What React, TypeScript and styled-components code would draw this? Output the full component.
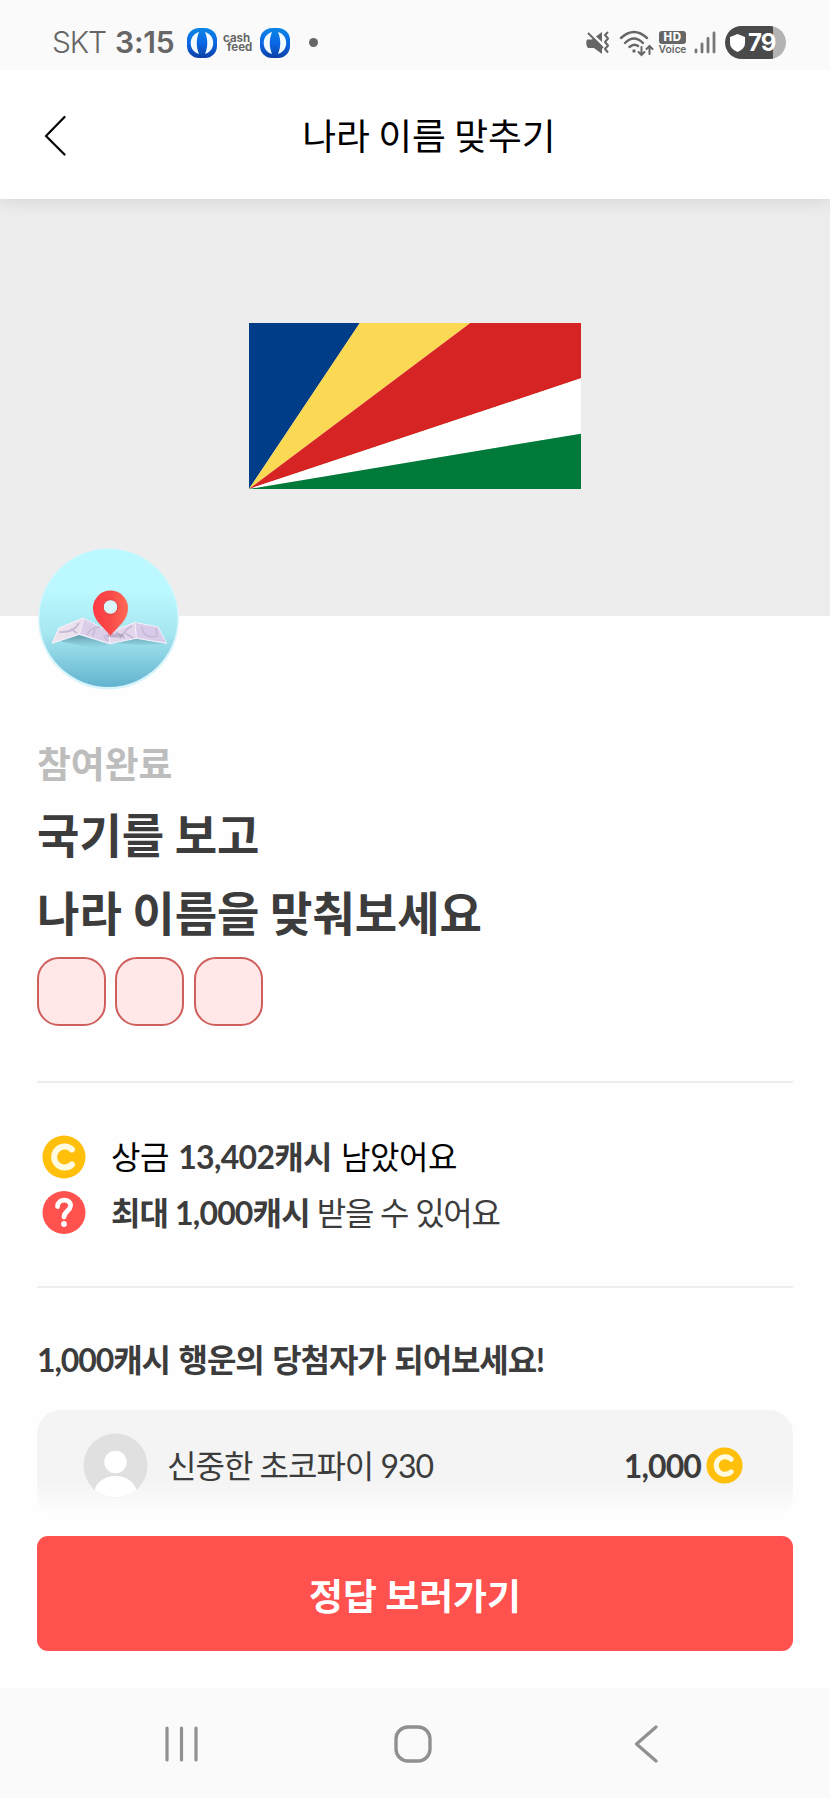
import React from "react";
import styled, { createGlobalStyle } from "styled-components";

const GlobalStyle = createGlobalStyle`
  * { box-sizing: border-box; }
  body { margin: 0; background: #fefefe; }
  p, h1, h2, h3 { margin: 0; font-weight: inherit; }
`;

const Screen = styled.div`
  width: 830px;
  height: 1798px;
  display: flex;
  flex-direction: column;
  overflow: hidden;
  background: #fefefe;
  color: #3c3c3c;
  font-family: Lato, "Noto Sans CJK KR", sans-serif;
`;

const StatusBar = styled.div`
  position: relative;
  z-index: 2;
  height: 70px;
  flex: none;
  display: flex;
  justify-content: space-between;
  padding: 26px 44px 0 52px;
  background: #fafafa;
  color: #666;
  font-family: Inter, sans-serif;
`;

const StatusGroup = styled.div`
  height: 33px;
  display: flex;
  align-items: center;
`;

const Carrier = styled.span`
  width: 63px;
  font-size: 30px;
  font-weight: 300;
  line-height: 33px;
  letter-spacing: -1.2px;
`;

const Clock = styled.span`
  width: 72px;
  font-size: 30px;
  font-weight: 600;
  line-height: 33px;
  letter-spacing: -0.2px;
`;

const CashFeed = styled.span`
  width: 43px;
  padding-left: 6px;
  font-size: 11.5px;
  font-weight: 700;
  line-height: 9px;
  white-space: nowrap;
  span { display: block; }
  span + span { padding-left: 4px; }
`;

const NoticeDot = styled.i`
  width: 9px;
  height: 9px;
  margin-left: 19px;
  border-radius: 50%;
  background: #666;
`;

const StatusIcons = styled.div`
  display: flex;
  align-items: center;
  gap: 9px;
`;

const VoiceBadge = styled.div`
  width: 27px;
  margin: 1px 8px 0 5px;
  display: flex;
  flex-direction: column;
  align-items: center;
  font-family: Roboto, sans-serif;
  font-size: 11px;
  font-weight: 500;
  line-height: 11px;
  b {
    width: 27px;
    height: 13px;
    border-radius: 3px;
    background: #666;
    color: #fff;
    font: 800 11.5px/13px Inter, sans-serif;
    letter-spacing: 0.6px;
    text-align: center;
  }
`;

const Battery = styled.div`
  width: 61px;
  height: 33px;
  margin-left: 9px;
  padding-left: 5px;
  display: flex;
  align-items: center;
  gap: 3px;
  border-radius: 17px;
  background: linear-gradient(90deg, #4a4a4a 48px, #b3b3b3 48px);
  color: #fff;
  font-size: 24px;
  font-weight: 700;
  letter-spacing: -1px;
`;

const Header = styled.header`
  position: relative;
  z-index: 1;
  height: 129px;
  flex: none;
  display: grid;
  grid-template-columns: 100px 1fr 72px;
  align-items: center;
  background: #fff;
  box-shadow: 0 2px 18px rgba(0, 0, 0, 0.11);
`;

const BackIcon = styled.svg`
  margin-left: 43px;
`;

const HeaderTitle = styled.h1`
  padding-bottom: 2px;
  color: #000;
  text-align: center;
  font: 400 36.8px/50px "Noto Sans CJK KR", sans-serif;
`;

const Hero = styled.section`
  height: 417px;
  flex: none;
  display: flex;
  justify-content: center;
  padding-top: 124.4px;
  background: #ededed;
`;

const Content = styled.main`
  flex: 1;
  padding: 0 37px;
`;

const Emblem = styled.svg`
  display: block;
  position: relative;
  margin: -68px 0 0 0;
`;

const State = styled.p`
  margin-top: 44px;
  color: #bdbdbd;
  font: 700 36.8px/54px "Noto Sans CJK KR", sans-serif;
`;

const Question = styled.h2`
  margin-top: 6px;
  font: 700 46.1px/77.6px "Noto Sans CJK KR", sans-serif;
`;

const AnswerRow = styled.div`
  display: flex;
  gap: 9.4px;
  margin-top: 7px;
`;

const AnswerBox = styled.i`
  width: 69px;
  height: 69px;
  border: 2px solid #cf5f5d;
  border-radius: 22px;
  background: #ffe8e7;
`;

const Facts = styled.section`
  height: 207px;
  margin-top: 55px;
  padding: 46px 0 0 5px;
  border-top: 2px solid #ededed;
  border-bottom: 2px solid #ededed;
`;

const Fact = styled.p<{ $dark?: boolean }>`
  height: 55.6px;
  display: flex;
  align-items: center;
  gap: 25px;
  color: ${(p) => (p.$dark ? "#000" : "#3c3c3c")};
  font-size: 32px;
  line-height: 55px;
  letter-spacing: ${(p) => (p.$dark ? "-0.5px" : "-1.25px")};
  word-spacing: ${(p) => (p.$dark ? "1.6px" : "0")};
  white-space: nowrap;
  b { color: #3c3c3c; letter-spacing: ${(p) => (p.$dark ? "-0.7px" : "-0.85px")}; }
`;

const LuckyTitle = styled.h3`
  margin-top: 44px;
  font-size: 32px;
  font-weight: 700;
  line-height: 55px;
  letter-spacing: -1.1px;
  word-spacing: 2px;
`;

const WinnerCard = styled.div`
  height: 110px;
  margin-top: 23px;
  padding: 0 50px 0 46px;
  display: flex;
  align-items: center;
  border-radius: 24px;
  background: linear-gradient(#f4f4f4 72px, #fefefe 105px);
`;

const WinnerName = styled.span`
  flex: 1;
  margin: 2px 0 0 19px;
  font-size: 32px;
  line-height: 48px;
  letter-spacing: -1px;
`;

const Prize = styled.b`
  margin: 2px 5px 0 0;
  font-size: 32px;
  line-height: 48px;
  letter-spacing: -0.9px;
`;

const AnswerButton = styled.button`
  display: block;
  width: 756px;
  height: 115px;
  margin-top: 16px;
  padding: 0;
  border: 0;
  border-radius: 11px;
  background: #ff514e;
  color: #fff;
  font: 700 36.9px/112px "Noto Sans CJK KR", sans-serif;
`;

const NavBar = styled.nav`
  height: 110px;
  flex: none;
  display: flex;
  justify-content: space-between;
  padding: 37px 171px 0 164px;
  background: #fafafa;
`;

const HomeIcon = styled.svg`
  margin-right: 7px;
`;

function AppIcon() {
  return (
    <svg width="30" height="30" viewBox="0 0 30 30">
      <defs>
        <linearGradient id="appBlue" x2="0" y2="1">
          <stop stopColor="#0c86e4" />
          <stop offset=".5" stopColor="#0a67e6" />
          <stop offset="1" stopColor="#0d3fa4" />
        </linearGradient>
      </defs>
      <rect width="30" height="30" rx="12" fill="url(#appBlue)" />
      <path d="M12 4C1 7 1 23 12 26C9 19 9 11 12 4ZM18 4C29 7 29 23 18 26C21 19 21 11 18 4Z" fill="#f2fbff" />
    </svg>
  );
}

function MuteIcon() {
  return (
    <svg width="24" height="24" viewBox="0 0 24 24" fill="none" stroke="#666" strokeWidth="2">
      <path d="M1 8.500h5l2-1.500 8 8v8l-8-6H2q-3-4-1-8.500ZM10 5.500L16 1v10Z" fill="#666" stroke="none" />
      <path d="M2 2l15 15" />
      <path d="M22 1l-3 3 3 3.500-3 3.500 3 3.500-3 3.500 3 3.500" strokeLinejoin="round" />
    </svg>
  );
}

function WifiIcon() {
  return (
    <svg width="35" height="28" viewBox="0 0 35 28" fill="none" stroke="#666" strokeWidth="2.400" strokeLinecap="round">
      <path d="M2 9Q15-3 28 9M6 14Q15 5 24 14M10.500 18Q15 14 19 17" />
      <circle cx="15" cy="22" r="1.700" fill="#666" stroke="none" />
      <path d="M22.500 18v8m-3-3 3 3 3-3M30.500 25v-8m-3 3 3-3 3 3" strokeWidth="2" />
    </svg>
  );
}

function SignalIcon() {
  return (
    <svg width="22" height="24" viewBox="0 0 22 24" stroke="#777" strokeWidth="2.800" strokeLinecap="round">
      <path d="M2 19v2M8 13v8M14 7.500v13.500M20 2v19" />
    </svg>
  );
}

function Coin({ size }: { size: number }) {
  return (
    <svg width={size} height={size} viewBox="0 0 44 44">
      <circle cx="22" cy="22" r="21.500" fill="#ffbf0a" />
      <path d="M30 14.500A10.500 10.500 0 1 0 30 29.500" fill="none" stroke="#fffbe0" strokeWidth="6" strokeLinecap="round" />
    </svg>
  );
}

function QuestionMark() {
  return (
    <svg width="44" height="44" viewBox="0 0 44 44">
      <circle cx="22" cy="21.500" r="21.500" fill="#ff514e" />
      <path d="M15.500 15.500C16 6.500 29 7.500 28.500 15C28 20 22 20.500 22 26" fill="none" stroke="#fff" strokeWidth="4.800" strokeLinecap="round" />
      <circle cx="22" cy="33" r="2.900" fill="#fff" />
    </svg>
  );
}

function MapEmblem() {
  return (
    <Emblem width="143" height="143" viewBox="0 0 143 143">
      <defs>
        <linearGradient id="sky" x2="0" y2="1">
          <stop offset=".3" stopColor="#bcf8ff" />
          <stop offset=".62" stopColor="#a5e6f0" />
          <stop offset="1" stopColor="#62b3cf" />
        </linearGradient>
        <linearGradient id="pin">
          <stop stopColor="#ff3a46" />
          <stop offset=".5" stopColor="#f84a48" />
          <stop offset="1" stopColor="#ff6b55" />
        </linearGradient>
        <linearGradient id="shade" x2="0" y2="1">
          <stop stopColor="#4d8093" stopOpacity=".8" />
          <stop offset="1" stopColor="#6bb5c7" stopOpacity="0" />
        </linearGradient>
        <linearGradient id="paper">
          <stop stopColor="#eee3ec" />
          <stop offset="1" stopColor="#ddd0ec" />
        </linearGradient>
      </defs>
      <circle cx="71.500" cy="71" r="70.500" fill="#d8f5fc" />
      <circle cx="71.500" cy="70" r="69" fill="url(#sky)" />
      <path d="M22 93l20-6 30 9-12 5zM74 95l26-5 28 6-22 1z" fill="url(#shade)" />
      <path d="M22 80L46 70 73 84 98 74.500 121 79 129.500 95.300 99.500 90.300 72.500 95.700 42.500 86.300 15 95.300z" fill="url(#paper)" stroke="#f7f2fb" strokeWidth="1" />
      <path d="M46 70.500L73 84.500v10.500L42.500 85.500zM98 75l22.500 4.500L128.500 94 99.500 89z" fill="#d3c4e8" opacity=".6" />
      <path d="M22 84q15 1 20-9M34 81l6 4M50 87q3-8 13-8M58 81l-2 7M67 88l4 5M79 84l9 6M83 91q4-9 12-13M88 85l8 5M105 79q1 12 15 9l-1-8" fill="none" stroke="#c6b9d8" strokeWidth="1.700" />
      <path d="M42.500 86l4-15M72.500 95V85M99.500 90L98 75.500" stroke="#f8f0fa" fill="none" />
      <ellipse cx="78" cy="87.500" rx="9" ry="2" fill="#9989a5" opacity=".5" />
      <path d="M73.500 88C67 79 56 73 56 60A17.500 17.500 0 0 1 91 60C91 73 80 79 73.500 88Z" fill="url(#pin)" />
      <circle cx="73.500" cy="59" r="7.300" fill="#daf8fa" stroke="#e33b42" />
    </Emblem>
  );
}

function Flag() {
  return (
    <svg width="332" height="166" viewBox="0 0 332 166">
      <path d="M0 166V0h111z" fill="#003d88" />
      <path d="M0 166L110.670 0h110.660z" fill="#fcd955" />
      <path d="M0 166L221.330 0H332v55.330z" fill="#d62424" />
      <path d="M0 166L332 55.330v55.340z" fill="#fff" />
      <path d="M0 166l332-55.330V166z" fill="#007a39" />
    </svg>
  );
}

function Avatar() {
  return (
    <svg width="65" height="65" viewBox="0 0 65 65">
      <clipPath id="avatarClip"><circle cx="32.500" cy="32.500" r="32" /></clipPath>
      <g clipPath="url(#avatarClip)">
        <rect width="65" height="65" fill="#e0e0e0" />
        <circle cx="32.500" cy="29" r="11.200" fill="#fff" />
        <ellipse cx="32.500" cy="61" rx="21.500" ry="18" fill="#fff" />
      </g>
    </svg>
  );
}

export default function App() {
  return (
    <Screen>
      <GlobalStyle />
      <StatusBar>
        <StatusGroup>
          <Carrier>SKT</Carrier>
          <Clock>3:15</Clock>
          <AppIcon />
          <CashFeed><span>cash</span><span>feed</span></CashFeed>
          <AppIcon />
          <NoticeDot />
        </StatusGroup>
        <StatusGroup>
          <StatusIcons><MuteIcon /><WifiIcon /></StatusIcons>
          <VoiceBadge><b>HD</b>Voice</VoiceBadge>
          <SignalIcon />
          <Battery>
            <svg width="15" height="18" viewBox="0 0 15 18"><path d="M7.500 0L15 3v6q0 6-7.500 9Q0 15 0 9V3z" fill="#fff" /></svg>
            79
          </Battery>
        </StatusGroup>
      </StatusBar>
      <Header>
        <BackIcon width="24" height="42" viewBox="0 0 24 42" fill="none" stroke="#000" strokeWidth="2.200" strokeLinecap="round" strokeLinejoin="round">
          <path d="M21.500 3L3 22l18.500 18.500" />
        </BackIcon>
        <HeaderTitle>나라 이름 맞추기</HeaderTitle>
      </Header>
      <Hero><Flag /></Hero>
      <Content>
        <MapEmblem />
        <State>참여완료</State>
        <Question>국기를 보고<br />나라 이름을 맞춰보세요</Question>
        <AnswerRow><AnswerBox /><AnswerBox /><AnswerBox /></AnswerRow>
        <Facts>
          <Fact $dark><Coin size={44} /><span>상금 <b>13,402캐시</b> 남았어요</span></Fact>
          <Fact><QuestionMark /><span><b>최대 1,000캐시</b> 받을 수 있어요</span></Fact>
        </Facts>
        <LuckyTitle>1,000캐시 행운의 당첨자가 되어보세요!</LuckyTitle>
        <WinnerCard>
          <Avatar />
          <WinnerName>신중한 초코파이 930</WinnerName>
          <Prize>1,000</Prize>
          <Coin size={37} />
        </WinnerCard>
        <AnswerButton>정답 보러가기</AnswerButton>
      </Content>
      <NavBar>
        <svg width="35" height="38" viewBox="0 0 35 38" stroke="#909090" strokeWidth="3.200" strokeLinecap="round"><path d="M3 3v32M17.500 3v32M32 3v32" /></svg>
        <HomeIcon width="38" height="38" viewBox="0 0 38 38" fill="none" stroke="#909090" strokeWidth="3.400"><rect x="2" y="2" width="34" height="34" rx="12" /></HomeIcon>
        <svg width="25" height="38" viewBox="0 0 25 38" fill="none" stroke="#909090" strokeWidth="3.200" strokeLinecap="round" strokeLinejoin="round"><path d="M22 2L2.500 19 22 36" /></svg>
      </NavBar>
    </Screen>
  );
}
